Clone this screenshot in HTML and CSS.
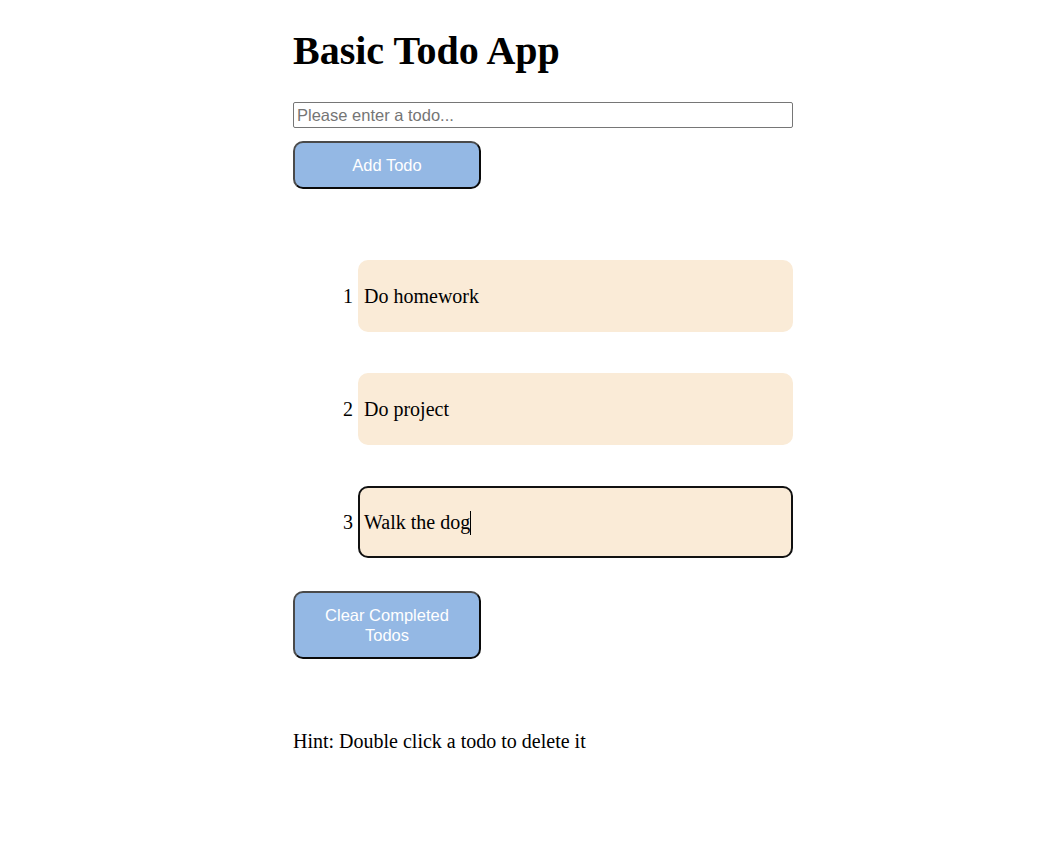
FILE: index.html
```html
<!DOCTYPE html>
<html>
<head>
<meta charset="utf-8">
<title>Basic Todo App</title>
<link rel="stylesheet" href="styles.css">
</head>
<body>
<div class="app">
  <h1 class="title">Basic Todo App</h1>
  <input class="todo-input" type="text" placeholder="Please enter a todo...">
  <button class="btn btn-add">Add Todo</button>
  <ol class="todo-list">
    <li class="todo">Do homework</li>
    <li class="todo">Do project</li>
    <li class="todo todo-focus">Walk the dog<span class="caret"></span></li>
  </ol>
  <button class="btn btn-clear">Clear Completed Todos</button>
  <p class="hint">Hint: Double click a todo to delete it</p>
</div>
</body>
</html>
```

FILE: styles.css
```css
html, body {
  margin: 0;
  padding: 0;
  background: #ffffff;
}

body {
  font-family: "Liberation Serif", "Times New Roman", serif;
  color: #000;
}

.app {
  margin-left: 293px;
  width: 500px;
  display: flex;
  flex-direction: column;
  align-items: flex-start;
}

.title {
  margin: 28px 0 0 0;
  font-size: 40px;
  line-height: 45px;
  font-weight: bold;
}

.todo-input {
  margin: 29px 0 0 0;
  box-sizing: border-box;
  width: 500px;
  height: 26px;
  padding: 1px 3px;
  border: 1px solid #767676;
  border-radius: 2px;
  font-family: "Liberation Sans", Arial, sans-serif;
  font-size: 16.5px;
  color: #000;
  outline: none;
}

.todo-input::placeholder {
  color: #757575;
}

.btn {
  box-sizing: border-box;
  width: 188px;
  background: #94b8e4;
  color: #ffffff;
  font-family: "Liberation Sans", Arial, sans-serif;
  font-size: 16.5px;
  line-height: 20px;
  border: 2px solid;
  border-color: #4a4a4a #0a0a0a #0a0a0a #4a4a4a;
  border-radius: 10px;
  padding: 0 14px;
  text-align: center;
}

.btn-add {
  margin-top: 13px;
  height: 48px;
}

.btn-clear {
  margin-top: 33px;
  height: 68px;
}

.todo-list {
  margin: 71px 0 0 0;
  padding: 0 0 0 65px;
  width: 435px;
}

.todo {
  box-sizing: border-box;
  height: 72px;
  padding: 22px 4px;
  line-height: 24px;
  font-size: 20px;
  background: #faebd7;
  border: 2px solid transparent;
  border-radius: 10px;
}

.todo::marker {
  content: counter(list-item) " ";
}

.todo + .todo {
  margin-top: 41px;
}

.todo-focus {
  border-color: #111111;
}

.caret {
  display: inline-block;
  width: 1px;
  height: 24px;
  background: #000;
  vertical-align: -6px;
}

.hint {
  margin: 71px 0 0 0;
  font-size: 20px;
  line-height: 23px;
}
```
